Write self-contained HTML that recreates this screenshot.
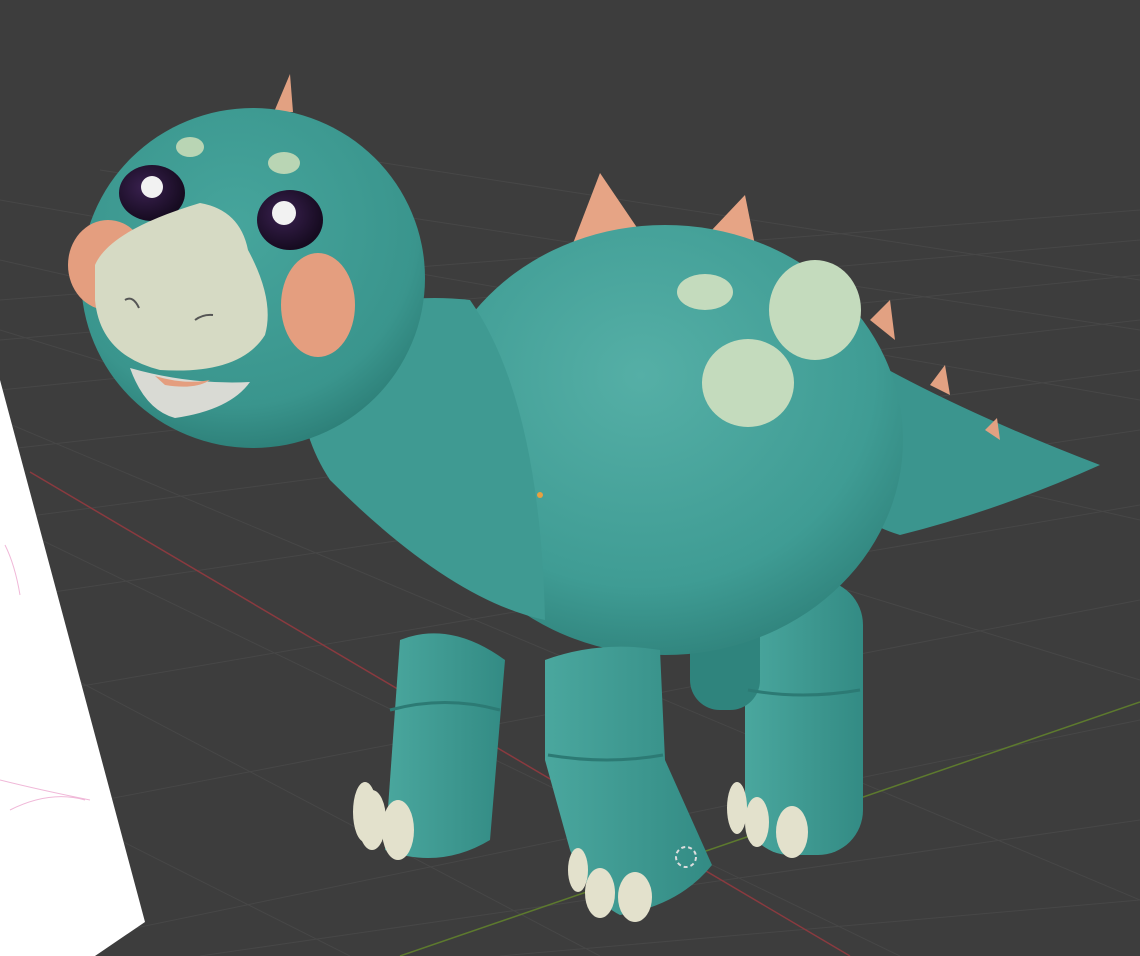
<!DOCTYPE html>
<html><head><meta charset="utf-8"><style>
html,body{margin:0;padding:0;background:#3d3d3d;overflow:hidden}
svg{display:block}
</style></head><body>
<svg width="1140" height="956" viewBox="0 0 1140 956" xmlns="http://www.w3.org/2000/svg">
<defs>
<radialGradient id="body" cx="0.45" cy="0.35" r="0.7">
<stop offset="0" stop-color="#55afa6"/><stop offset="0.7" stop-color="#3f9c94"/><stop offset="1" stop-color="#2e8079"/>
</radialGradient>
<radialGradient id="head" cx="0.45" cy="0.35" r="0.7">
<stop offset="0" stop-color="#46a59c"/><stop offset="0.75" stop-color="#3a958d"/><stop offset="1" stop-color="#2a7a73"/>
</radialGradient>
<linearGradient id="leg" x1="0" x2="1"><stop offset="0" stop-color="#4aa79e"/><stop offset="1" stop-color="#338b84"/></linearGradient>
<radialGradient id="eye" cx="0.4" cy="0.4" r="0.6"><stop offset="0" stop-color="#3a2150"/><stop offset="1" stop-color="#160b20"/></radialGradient>
</defs>
<rect width="1140" height="956" fill="#3d3d3d"/>
<g stroke="#474747" stroke-width="1" fill="none">
<path d="M0 300 L1140 210 M0 340 L1140 240 M0 390 L1140 275 M0 450 L1140 320 M0 520 L1140 370 M0 600 L1140 430 M0 700 L1140 505 M0 820 L1140 600 M0 956 L1140 720 M200 956 L1140 820 M500 956 L1140 900"/>
<path d="M0 260 L1140 520 M0 200 L1140 400 M100 170 L1140 330 M300 150 L1140 280 M0 330 L1140 680 M0 420 L1140 900 M0 520 L900 956 M0 640 L600 956 M0 780 L350 956"/>
</g>
<path d="M30 472 L850 956" stroke="#8a3a3f" stroke-width="1.5"/>
<path d="M400 956 L1140 702" stroke="#5d7a2e" stroke-width="1.5"/>
<polygon points="0,380 145,922 95,956 0,956" fill="#ffffff"/>
<path d="M5 545 q10 20 15 50 M0 780 q40 10 90 20 M10 810 q40 -20 75 -10" stroke="#f0b8d8" fill="none"/>
<!-- tail -->
<path d="M820 330 Q930 400 1100 465 Q1000 510 900 535 Q850 520 830 480 Z" fill="#3b958e"/>
<polygon points="870,320 890,300 895,340" fill="#e2a182"/>
<polygon points="930,385 945,365 950,395" fill="#e2a182"/>
<polygon points="985,430 997,418 1000,440" fill="#e2a182"/>
<!-- back spikes -->
<polygon points="572,246 600,173 640,232" fill="#e6a485"/>
<polygon points="710,232 745,195 755,245" fill="#e6a485"/>
<!-- back legs -->
<rect x="745" y="580" width="118" height="275" rx="45" fill="url(#leg)"/>
<rect x="690" y="560" width="70" height="150" rx="30" fill="#2f847d"/>
<!-- body -->
<ellipse cx="665" cy="440" rx="238" ry="215" fill="url(#body)"/>
<!-- neck -->
<path d="M300 330 Q380 290 470 300 Q540 400 545 620 Q450 600 330 480 Q290 420 300 330 Z" fill="#3f9a92"/>
<!-- spots -->
<ellipse cx="705" cy="292" rx="28" ry="18" fill="#c4dbbd"/>
<ellipse cx="815" cy="310" rx="46" ry="50" fill="#c4dbbd"/>
<ellipse cx="748" cy="383" rx="46" ry="44" fill="#c4dbbd"/>
<circle cx="540" cy="495" r="3" fill="#e8a040"/>
<!-- front legs -->
<path d="M400 640 Q450 620 505 660 L490 840 Q440 870 385 850 Z" fill="url(#leg)"/>
<path d="M545 660 Q600 640 660 650 L665 760 L712 865 Q680 905 620 915 Q590 900 570 850 L545 760 Z" fill="url(#leg)"/>
<path d="M390 710 q55 -15 110 0 M548 755 q60 10 115 0 M748 690 q55 10 112 0" stroke="#2c7a74" stroke-width="3" fill="none"/>
<!-- toes -->
<g fill="#e3e1cc">
<ellipse cx="365" cy="812" rx="12" ry="30"/><ellipse cx="372" cy="820" rx="14" ry="30"/><ellipse cx="398" cy="830" rx="16" ry="30"/>
<ellipse cx="578" cy="870" rx="10" ry="22"/><ellipse cx="600" cy="893" rx="15" ry="25"/><ellipse cx="635" cy="897" rx="17" ry="25"/>
<ellipse cx="737" cy="808" rx="10" ry="26"/><ellipse cx="757" cy="822" rx="12" ry="25"/><ellipse cx="792" cy="832" rx="16" ry="26"/>
</g>
<circle cx="686" cy="857" r="10" fill="none" stroke="#ddd" stroke-width="2" stroke-dasharray="4 3"/>
<!-- head spike -->
<polygon points="274,112 290,74 293,112" fill="#e2a182"/>
<!-- head -->
<ellipse cx="253" cy="278" rx="172" ry="170" fill="url(#head)"/>
<ellipse cx="190" cy="147" rx="14" ry="10" fill="#b9d5b4"/>
<ellipse cx="284" cy="163" rx="16" ry="11" fill="#b9d5b4"/>
<!-- cheeks -->
<ellipse cx="108" cy="265" rx="40" ry="45" fill="#e49e7f"/>
<ellipse cx="318" cy="305" rx="37" ry="52" fill="#e49e7f"/>
<!-- eyes -->
<ellipse cx="152" cy="193" rx="33" ry="28" fill="url(#eye)"/>
<ellipse cx="290" cy="220" rx="33" ry="30" fill="url(#eye)"/>
<circle cx="152" cy="187" r="11" fill="#f2f2f2"/>
<circle cx="284" cy="213" r="12" fill="#f2f2f2"/>
<!-- snout -->
<path d="M95 265 Q110 230 200 203 Q240 210 248 250 Q275 300 265 335 Q240 375 160 370 Q100 355 95 300 Z" fill="#d6dac4"/>
<path d="M125 300 q8 -5 14 8 M195 320 q8 -6 18 -5" stroke="#555" stroke-width="2" fill="none"/>
<!-- mouth -->
<path d="M130 368 Q190 385 250 382 Q230 410 175 418 Q145 410 130 368 Z" fill="#d9dad4"/>
<path d="M155 376 Q185 385 210 380 Q195 390 165 385 Z" fill="#e49e7f"/>
</svg>
</body></html>
